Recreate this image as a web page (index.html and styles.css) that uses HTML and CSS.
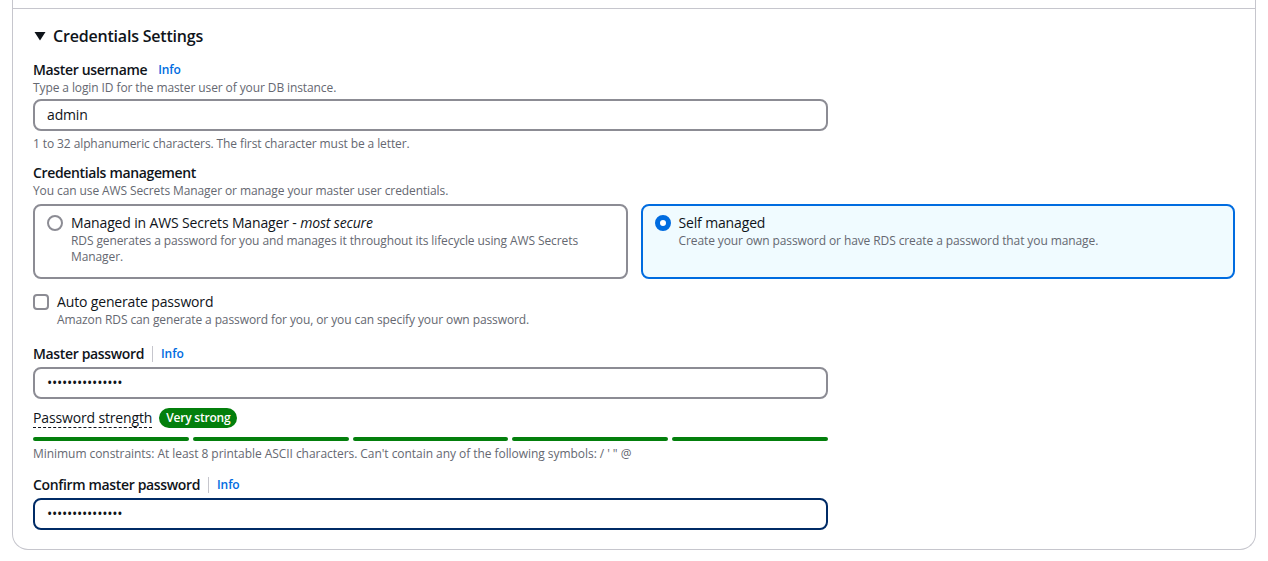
FILE: index.html
```html
<!DOCTYPE html>
<html lang="en">
<head>
<meta charset="utf-8">
<title>Credentials Settings</title>
<link rel="stylesheet" href="styles.css">
</head>
<body>
<div class="panel">
  <div class="prev-section"></div>
  <div class="section">
    <div class="section-header">
      <svg class="caret" width="12" height="10" viewBox="0 0 12 10" aria-hidden="true">
        <polygon points="0.5,1 11.5,1 6,9.5" fill="#0f141a"/>
      </svg>
      <h2 class="section-title">Credentials Settings</h2>
    </div>

    <div class="field field-first">
      <div class="label-row">
        <span class="label">Master username</span>
        <a class="info info-plain">Info</a>
      </div>
      <div class="desc">Type a login ID for the master user of your DB instance.</div>
      <div class="input">admin</div>
      <div class="hint">1 to 32 alphanumeric characters. The first character must be a letter.</div>
    </div>

    <div class="field field-mgmt">
      <div class="label-row">
        <span class="label">Credentials management</span>
      </div>
      <div class="desc">You can use AWS Secrets Manager or manage your master user credentials.</div>
      <div class="tiles">
        <div class="tile">
          <span class="radio"></span>
          <div class="tile-body">
            <div class="tile-label">Managed in AWS Secrets Manager - <em>most secure</em></div>
            <div class="tile-desc">RDS generates a password for you and manages it throughout its lifecycle using AWS Secrets Manager.</div>
          </div>
        </div>
        <div class="tile tile-selected">
          <span class="radio radio-checked"></span>
          <div class="tile-body">
            <div class="tile-label">Self managed</div>
            <div class="tile-desc">Create your own password or have RDS create a password that you manage.</div>
          </div>
        </div>
      </div>
    </div>

    <div class="checkbox-row">
      <span class="checkbox"></span>
      <div class="checkbox-body">
        <div class="checkbox-label">Auto generate password</div>
        <div class="desc">Amazon RDS can generate a password for you, or you can specify your own password.</div>
      </div>
    </div>

    <div class="field field-pw">
      <div class="label-row">
        <span class="label">Master password</span>
        <span class="sep"></span>
        <a class="info">Info</a>
      </div>
      <div class="input input-pw">&bull;&bull;&bull;&bull;&bull;&bull;&bull;&bull;&bull;&bull;&bull;&bull;&bull;&bull;&bull;</div>
      <div class="strength-row">
        <span class="strength-label">Password strength</span>
        <span class="badge">Very strong</span>
      </div>
      <div class="bars">
        <span class="bar"></span>
        <span class="bar"></span>
        <span class="bar"></span>
        <span class="bar"></span>
        <span class="bar"></span>
      </div>
      <div class="hint hint-tight">Minimum constraints: At least 8 printable ASCII characters. Can't contain any of the following symbols: / ' " @</div>
    </div>

    <div class="field field-confirm">
      <div class="label-row">
        <span class="label">Confirm master password</span>
        <span class="sep"></span>
        <a class="info">Info</a>
      </div>
      <div class="input input-pw input-focused">&bull;&bull;&bull;&bull;&bull;&bull;&bull;&bull;&bull;&bull;&bull;&bull;&bull;&bull;&bull;</div>
    </div>
  </div>
</div>
</body>
</html>
```

FILE: styles.css
```css
* {
  box-sizing: border-box;
}

html, body {
  margin: 0;
  padding: 0;
  background: #ffffff;
}

body {
  padding: 0 12px;
  font-family: "Open Sans", "Noto Sans", Arial, sans-serif;
  color: #0f141a;
  font-size: 14px;
  line-height: 20px;
  letter-spacing: -0.15px;
}

.panel {
  border: 1px solid #c6c6cd;
  border-top: none;
  border-radius: 0 0 16px 16px;
}

.prev-section {
  height: 9px;
  border-bottom: 1px solid #c6c6cd;
}

.section {
  padding: 16px 20px 19px 20px;
}

.section-header {
  display: flex;
  align-items: center;
  height: 22px;
}

.caret {
  display: block;
  margin-left: 1px;
  margin-right: 7px;
}

.section-title {
  margin: 0;
  font-size: 16px;
  line-height: 22px;
  font-weight: 600;
  letter-spacing: -0.2px;
}

.field-first {
  margin-top: 13px;
}

.label-row {
  display: flex;
  align-items: center;
  height: 20px;
}

.label {
  font-weight: 600;
  font-size: 14px;
  letter-spacing: -0.35px;
}

.info {
  color: #006ce0;
  font-weight: 600;
  font-size: 12px;
  letter-spacing: -0.1px;
}

.info-plain {
  margin-left: 11px;
}

.sep {
  width: 1px;
  height: 16px;
  background: #c6c6cd;
  margin: 0 8px;
}

.desc,
.hint,
.tile-desc {
  font-size: 12px;
  line-height: 16px;
  color: #656871;
  letter-spacing: -0.1px;
}

.hint-tight {
  letter-spacing: -0.05px;
}

.input {
  margin-top: 3px;
  width: 795px;
  height: 32px;
  border: 2px solid #8c8c94;
  border-radius: 8px;
  padding: 4px 12px;
  font-size: 14px;
  line-height: 20px;
  color: #0f141a;
}

.input-pw {
  font-size: 14px;
  letter-spacing: -0.25px;
  line-height: 20px;
}

.input-focused {
  border-color: #002b66;
}

.hint {
  margin-top: 5px;
}

.field-mgmt {
  margin-top: 11px;
}

.tiles {
  margin-top: 5px;
  display: grid;
  grid-template-columns: 1fr 1fr;
  gap: 13px;
}

.tile {
  display: flex;
  align-items: flex-start;
  gap: 8px;
  border: 2px solid #8c8c94;
  border-radius: 8px;
  padding: 7px 12px 11px 12px;
  min-height: 75px;
}

.tile-selected {
  border-color: #006ce0;
  background: #f0fbff;
}

.radio {
  flex: none;
  width: 16px;
  height: 16px;
  margin-top: 2px;
  border: 2px solid #8c8c94;
  border-radius: 50%;
  background: #ffffff;
}

.radio-checked {
  border: 5px solid #006ce0;
}

.tile-label {
  font-size: 14px;
  line-height: 20px;
}

.checkbox-row {
  display: flex;
  align-items: flex-start;
  gap: 8px;
  margin-top: 13px;
}

.checkbox {
  flex: none;
  width: 16px;
  height: 16px;
  margin-top: 2px;
  border: 2px solid #8c8c94;
  border-radius: 4px;
}

.checkbox-label {
  font-size: 14px;
  line-height: 20px;
}

.field-pw {
  margin-top: 16px;
}

.strength-row {
  margin-top: 8px;
  display: flex;
  align-items: center;
  gap: 7px;
  height: 22px;
}

.strength-label {
  font-size: 14px;
  line-height: 18px;
  border-bottom: 1px dashed #0f141a;
}

.badge {
  background: #037f0c;
  color: #ffffff;
  font-size: 12px;
  font-weight: 600;
  line-height: 20px;
  padding: 0 7px;
  border-radius: 10px;
  letter-spacing: -0.2px;
}

.bars {
  margin-top: 8px;
  width: 795px;
  display: flex;
  gap: 4px;
}

.bar {
  flex: 1;
  height: 4px;
  border-radius: 2px;
  background: #037f0c;
}

.hint-tight {
  margin-top: 5px;
}

.field-confirm {
  margin-top: 13px;
}
```
